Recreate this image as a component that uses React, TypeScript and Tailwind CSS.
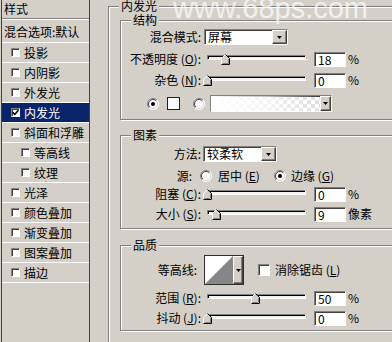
import type { ReactNode } from 'react'

/**
 * Layer Style dialog – Inner Glow page (Windows classic look)
 */

const sunken =
  'border border-t-[#808080] border-l-[#808080] border-b-white border-r-white shadow-[inset_1px_1px_0_#404040]'
const raised =
  'border border-t-white border-l-white border-b-[#404040] border-r-[#404040] shadow-[inset_-1px_-1px_0_#808080]'
const etched = 'border border-[#808080] shadow-[inset_1px_1px_0_#fff,1px_1px_0_#fff]'

const styleItems = [
  { label: '投影' },
  { label: '内阴影' },
  { label: '外发光' },
  { label: '内发光', checked: true, active: true },
  { label: '斜面和浮雕' },
  { label: '等高线', indent: true },
  { label: '纹理', indent: true },
  { label: '光泽' },
  { label: '颜色叠加' },
  { label: '渐变叠加' },
  { label: '图案叠加' },
  { label: '描边' },
]

function Caret() {
  return (
    <svg width="5" height="3" viewBox="0 0 5 3">
      <path d="M0 0h5L2.5 3z" fill="#000" />
    </svg>
  )
}

function DropButton({ className = '' }: { className?: string }) {
  return (
    <span className={`flex items-center justify-center shrink-0 bg-[#d4d0c8] ${raised} ${className}`}>
      <Caret />
    </span>
  )
}

function Select({ value, className = '' }: { value: string; className?: string }) {
  return (
    <div className={`h-[16px] flex bg-white ${sunken} ${className}`}>
      <span className="flex-1 pl-[3px] leading-[14px]">{value}</span>
      <DropButton className="w-[15px] h-full" />
    </div>
  )
}

function NumBox({ value }: { value: string }) {
  return (
    <div className={`ml-[4px] w-[32px] h-[15px] shrink-0 bg-white pl-[3px] leading-[13px] ${sunken}`}>
      {value}
    </div>
  )
}

function Thumb({ left }: { left: number }) {
  return (
    <svg className="absolute top-[3px]" style={{ left }} width="9" height="11" viewBox="0 0 9 11">
      <path d="M0.5 10.5V4.5L4.5 0.5L8.5 4.5V10.5Z" fill="#d4d0c8" />
      <path d="M0.5 10V4.5L4.5 0.5" stroke="#fff" fill="none" />
      <path d="M4.5 0.5L8.5 4.5V10.5H0.5" stroke="#000" fill="none" />
      <path d="M7.5 5V9.5H1.5" stroke="#808080" fill="none" />
    </svg>
  )
}

function Slider({ at }: { at: number }) {
  return (
    <div className="relative ml-[2px] w-[107px] h-[16px] shrink-0">
      <div className="ml-[4px] mt-[4px] w-[99px] h-[5px] bg-[#f2f2f2] border border-t-[#808080] border-l-[#808080] border-b-white border-r-white shadow-[inset_1px_1px_0_#000]" />
      <Thumb left={at - 4} />
    </div>
  )
}

function Radio({ checked }: { checked?: boolean }) {
  return (
    <svg width="12" height="12" viewBox="0 0 12 12" className="shrink-0">
      <circle cx="6" cy="6" r="5.5" fill="#fff" />
      <path d="M2.1 9.9A5.5 5.5 0 0 1 9.9 2.1" stroke="#808080" fill="none" />
      <path d="M9.9 2.1A5.5 5.5 0 0 1 2.1 9.9" stroke="#fff" fill="none" />
      <path d="M2.8 9.2A4.5 4.5 0 0 1 9.2 2.8" stroke="#404040" fill="none" />
      <path d="M9.2 2.8A4.5 4.5 0 0 1 2.8 9.2" stroke="#d4d0c8" fill="none" />
      {checked && <circle cx="6" cy="6" r="2" fill="#000" />}
    </svg>
  )
}

function CheckBox({ checked, size }: { checked?: boolean; size: string }) {
  return (
    <span className={`flex items-center justify-center shrink-0 bg-white ${sunken} ${size}`}>
      {checked && (
        <svg width="7" height="7" viewBox="0 0 7 7">
          <path d="M0.8 3.4L2.8 5.4L6.4 1.2" stroke="#000" strokeWidth="1.6" fill="none" />
        </svg>
      )}
    </span>
  )
}

function Row({ label, className = '', children }: { label: ReactNode; className?: string; children: ReactNode }) {
  return (
    <div className={`flex items-center h-[16px] ${className}`}>
      <span className="w-[80px] shrink-0 text-right whitespace-nowrap">{label}</span>
      {children}
    </div>
  )
}

function SliderRow({
  label,
  at,
  value,
  unit = '%',
  className = '',
}: {
  label: ReactNode
  at: number
  value: string
  unit?: string
  className?: string
}) {
  return (
    <Row label={label} className={className}>
      <Slider at={at} />
      <NumBox value={value} />
      <span className="ml-[2px] whitespace-nowrap">{unit}</span>
    </Row>
  )
}

function StyleList() {
  return (
    <div className="ml-[1px] w-[89px] shrink-0 border-x border-[#404040]">
      <div className="h-[19px] pl-[2px] flex items-center border-b border-[#808080] shadow-[0_1px_0_#fff]">样式</div>
      <div className="h-[24px] pl-[2px] pt-[3px] flex items-center border-b border-white whitespace-nowrap overflow-hidden">
        混合选项:默认
      </div>
      {styleItems.map((s) => (
        <div
          key={s.label}
          className={`h-[20px] flex items-center gap-[4px] border-b border-white whitespace-nowrap ${
            s.indent ? 'pl-[19px]' : 'pl-[9px]'
          } ${s.active ? 'bg-[#0a246a] text-white' : ''}`}
        >
          <CheckBox checked={s.checked} size="w-[9px] h-[9px]" />
          <span>{s.label}</span>
        </div>
      ))}
    </div>
  )
}

export default function App() {
  return (
    <div className="relative w-[392px] h-[342px] overflow-hidden bg-[#d4d0c8] text-black text-[12px] leading-[14px] [font-family:'Noto_Sans_CJK_SC',sans-serif] flex">
      <StyleList />

      {/* Inner Glow page */}
      <div className="pl-[18px] shrink-0">
        <fieldset className={`w-[300px] pb-[30px] ${etched}`}>
          <legend className="ml-[10px] px-[2px] leading-[12px] bg-[#d4d0c8]">内发光</legend>

          {/* 结构 */}
          <fieldset className={`ml-[11px] mt-[2px] w-[290px] pb-[7px] ${etched}`}>
            <legend className="ml-[10px] px-[2px] leading-[12px] bg-[#d4d0c8]">结构</legend>
            <Row label="混合模式:" className="mt-[3px]">
              <Select value="屏幕" className="ml-[3px] w-[84px]" />
            </Row>
            <SliderRow
              label={<>不透明度 (<u>O</u>):</>}
              at={22}
              value="18"
              className="mt-[6px]"
            />
            <SliderRow label={<>杂色 (<u>N</u>):</>} at={4} value="0" className="mt-[5px]" />
            <div className="mt-[7px] h-[17px] flex items-center pl-[26px]">
              <Radio checked />
              <span className="ml-[8px] w-[13px] h-[13px] border border-[#202020] bg-[#f6fbff]" />
              <span className="ml-[13px]">
                <Radio />
              </span>
              <div className={`ml-[5px] w-[122px] h-[17px] flex bg-[conic-gradient(#dedede_25%,#fff_0_50%,#dedede_0_75%,#fff_0)] bg-[length:8px_8px] ${sunken}`}>
                <div className="flex-1 bg-linear-to-r from-white via-white/70 to-white/0" />
                <DropButton className="w-[11px] h-full" />
              </div>
            </div>
          </fieldset>

          {/* 图素 */}
          <fieldset className={`ml-[11px] mt-[9px] w-[290px] pb-[6px] ${etched}`}>
            <legend className="ml-[10px] px-[2px] leading-[12px] bg-[#d4d0c8]">图素</legend>
            <Row label="方法:" className="mt-[5px]">
              <Select value="较柔软" className="ml-[2px] w-[74px]" />
            </Row>
            <div className="mt-[6px] h-[16px] flex items-center">
              <span className="w-[71px] shrink-0 text-right">源:</span>
              <span className="ml-[8px]">
                <Radio />
              </span>
              <span className="ml-[6px] whitespace-nowrap">
                居中 (<u>E</u>)
              </span>
              <span className="ml-[14px]">
                <Radio checked />
              </span>
              <span className="ml-[5px] whitespace-nowrap">
                边缘 (<u>G</u>)
              </span>
            </div>
            <SliderRow label={<>阻塞 (<u>C</u>):</>} at={4} value="0" className="mt-[2px]" />
            <SliderRow label={<>大小 (<u>S</u>):</>} at={13} value="9" unit="像素" className="mt-[4px]" />
          </fieldset>

          {/* 品质 */}
          <fieldset className={`ml-[11px] mt-[10px] w-[290px] pb-[4px] ${etched}`}>
            <legend className="ml-[10px] px-[2px] leading-[12px] bg-[#d4d0c8]">品质</legend>
            <div className="mt-[4px] h-[30px] flex items-center">
              <span className="w-[76px] shrink-0 text-right">等高线:</span>
              <div className="ml-[7px] w-[40px] h-[30px] flex border border-[#303030]">
                <svg width="28" height="28" viewBox="0 0 28 28" className="shrink-0">
                  <rect width="28" height="28" fill="#fff" />
                  <path d="M0 28L28 0V28Z" fill="#868686" />
                </svg>
                <DropButton className="w-[10px] h-full" />
              </div>
              <span className="ml-[14px]">
                <CheckBox size="w-[12px] h-[12px]" />
              </span>
              <span className="ml-[5px] whitespace-nowrap">
                消除锯齿 (<u>L</u>)
              </span>
            </div>
            <SliderRow label={<>范围 (<u>R</u>):</>} at={52} value="50" className="mt-[5px]" />
            <SliderRow label={<>抖动 (<u>J</u>):</>} at={4} value="0" className="mt-[4px]" />
          </fieldset>
        </fieldset>
      </div>

      {/* watermark */}
      <div className="absolute left-[173px] top-[-6px] text-[29px] leading-[29px] text-white/70 [font-family:'Liberation_Sans',sans-serif] pointer-events-none">
        www.68ps.com
      </div>
    </div>
  )
}
